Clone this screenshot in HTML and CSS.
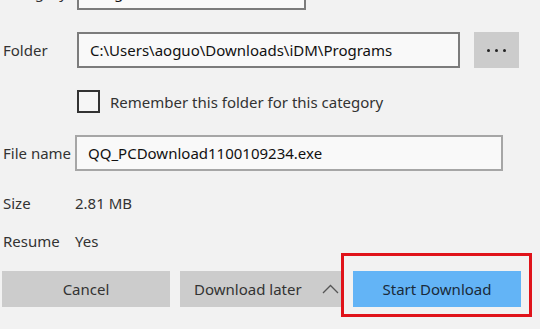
FILE: index.html
```html
<!DOCTYPE html>
<html>
<head>
<meta charset="utf-8">
<link rel="stylesheet" href="styles.css">
</head>
<body>
<div class="dialog">
  <div class="row row-category">
    <span class="label">Category</span>
    <div class="field field-dark field-category">Programs</div>
  </div>
  <div class="row row-folder">
    <span class="label">Folder</span>
    <div class="field field-dark field-folder">C:\Users\aoguo\Downloads\iDM\Programs</div>
    <div class="browse"><span class="dot"></span><span class="dot"></span><span class="dot"></span></div>
  </div>
  <div class="row row-check">
    <span class="checkbox"></span>
    <span class="check-text">Remember this folder for this category</span>
  </div>
  <div class="row row-file">
    <span class="label">File name</span>
    <div class="field field-light field-file">QQ_PCDownload1100109234.exe</div>
  </div>
  <div class="row row-info row-size">
    <span class="label">Size</span>
    <span class="value">2.81 MB</span>
  </div>
  <div class="row row-info row-resume">
    <span class="label">Resume</span>
    <span class="value">Yes</span>
  </div>
  <div class="buttons">
    <div class="btn btn-cancel">Cancel</div>
    <div class="btn btn-later">
      <span>Download later</span>
      <svg class="chev" width="17" height="10" viewBox="0 0 17 10"><path d="M1 9 L8.5 1.5 L16 9" fill="none" stroke="#555" stroke-width="1.3"/></svg>
    </div>
    <div class="highlight">
      <div class="btn btn-start">Start Download</div>
    </div>
  </div>
</div>
</body>
</html>
```

FILE: styles.css
```css
html, body {
  margin: 0;
  padding: 0;
  background: #f2f2f2;
  overflow: hidden;
}
body {
  width: 540px;
  height: 329px;
  font-family: "Noto Sans", "Open Sans", sans-serif;
  font-size: 15px;
  color: #222;
}
.dialog {
  display: flex;
  flex-direction: column;
  padding-left: 3px;
}
.row {
  display: flex;
  align-items: center;
}
.label {
  width: 72px;
  flex: none;
  color: #333;
}
.field {
  box-sizing: border-box;
  height: 36px;
  display: flex;
  align-items: center;
  padding-left: 11px;
  background: #f9f9f9;
  color: #111;
  white-space: nowrap;
  overflow: hidden;
}
.field-dark { border: 2px solid #7c7c7c; }
.field-light { border: 2px solid #a6a6a6; }
.row-category {
  margin-top: -26px;
  height: 36px;
}
.field-category {
  margin-left: 2px;
  width: 229px;
}
.row-folder {
  margin-top: 22px;
  height: 36px;
}
.field-folder {
  margin-left: 2px;
  width: 383px;
}
.browse {
  margin-left: 14px;
  width: 45px;
  height: 36px;
  background: #cccccc;
  display: flex;
  align-items: center;
  justify-content: center;
  gap: 5px;
}
.dot {
  width: 3px;
  height: 3px;
  border-radius: 50%;
  background: #222;
}
.row-check {
  margin-top: 22px;
  height: 23px;
  padding-left: 74px;
}
.checkbox {
  box-sizing: border-box;
  width: 23px;
  height: 23px;
  border: 2px solid #333;
  background: #f6f6f6;
}
.check-text {
  margin-left: 10px;
  color: #333;
}
.row-file {
  margin-top: 22px;
  height: 36px;
}
.field-file {
  width: 428px;
}
.row-info {
  height: 20px;
}
.row-size { margin-top: 22px; }
.row-resume { margin-top: 18px; }
.value { color: #333; }
.buttons {
  margin-top: 2px;
  margin-left: -1px;
  display: flex;
  align-items: flex-start;
  height: 64px;
}
.btn {
  box-sizing: border-box;
  height: 36px;
  display: flex;
  align-items: center;
  justify-content: center;
  color: #333;
}
.btn-cancel {
  margin-top: 18px;
  width: 168px;
  background: #cccccc;
}
.btn-later {
  margin-top: 18px;
  margin-left: 10px;
  width: 165px;
  background: #cccccc;
  justify-content: flex-start;
  padding-left: 14px;
}
.chev {
  margin-left: 20px;
}
.highlight {
  box-sizing: border-box;
  margin-left: -4px;
  width: 191px;
  height: 64px;
  border: 3px solid #e0131a;
  background: #f2f2f2;
  display: flex;
  align-items: flex-start;
  padding-left: 9px;
  padding-top: 15px;
}
.btn-start {
  width: 168px;
  background: #63b4f6;
  color: #1a2a3a;
}
```
